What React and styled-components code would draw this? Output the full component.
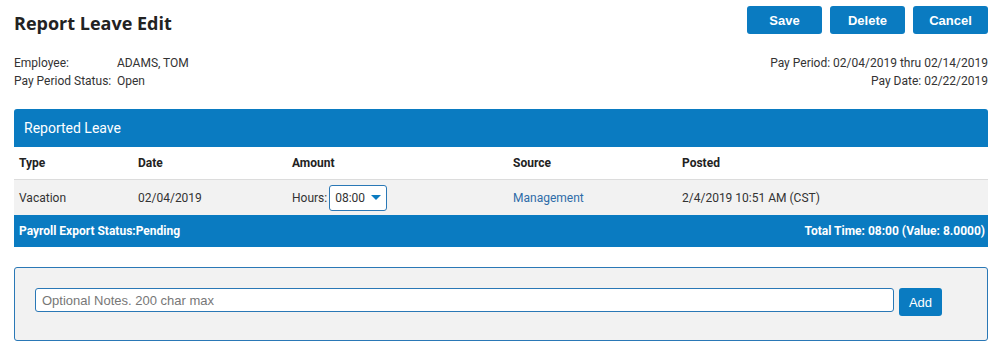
import React, { useState } from "react";
import styled, { createGlobalStyle } from "styled-components";

const GlobalStyle = createGlobalStyle`
  body {
    margin: 0;
    background: #fff;
    font-family: Roboto, "Liberation Sans", sans-serif;
    font-size: 12px;
    color: #333;
  }
`;

const BLUE = "#0a7bc1";

const Page = styled.div`
  padding: 6px 8px 0 14px;
  width: 974px;
`;

const TopBar = styled.div`
  display: flex;
  justify-content: space-between;
  align-items: flex-start;
`;

const Title = styled.h1`
  margin: 6px 0 0;
  font-family: "Open Sans", sans-serif;
  font-size: 18px;
  font-weight: 700;
  color: #222;
  line-height: 22px;
`;

const Buttons = styled.div`
  display: flex;
  gap: 8px;
`;

const Button = styled.button`
  width: ${({ $width }) => $width || "75px"};
  height: 28px;
  border: none;
  border-radius: 3px;
  background: ${BLUE};
  color: #fff;
  font-family: "Liberation Sans", Arial, sans-serif;
  font-size: 13px;
  font-weight: ${({ $bold }) => ($bold ? 700 : 400)};
  cursor: pointer;
  padding: 0;
`;

const InfoRow = styled.div`
  display: flex;
  justify-content: space-between;
  margin-top: 20px;
  line-height: 18px;
`;

const InfoGrid = styled.div`
  display: grid;
  grid-template-columns: 103px auto;
`;

const InfoRight = styled.div`
  text-align: right;
`;

const Panel = styled.div`
  margin-top: 19px;
`;

const PanelHeader = styled.div`
  background: ${BLUE};
  color: #fff;
  height: 38px;
  display: flex;
  align-items: center;
  padding-left: 10px;
  font-size: 14px;
  border-radius: 3px 3px 0 0;
`;

const Grid = styled.div`
  display: grid;
  grid-template-columns: 119px 154px 221px 169px 1fr;
`;

const HeadRow = styled(Grid)`
  height: 32px;
  align-items: center;
  border-bottom: 1px solid #dcdcdc;
  font-weight: 700;
  color: #222;
  padding-left: 5px;
`;

const DataRow = styled(Grid)`
  height: 35px;
  align-items: center;
  background: #f2f2f2;
  padding-left: 5px;
`;

const Cell = styled.div`
  display: flex;
  align-items: center;
  gap: 2px;
`;

const SourceLink = styled.a`
  color: #2e6ca8;
  text-decoration: none;
`;

const SelectBox = styled.div`
  display: flex;
  align-items: center;
  gap: 6px;
  height: 24px;
  padding: 0 5px 0 5px;
  border: 1px solid #2a78b6;
  border-radius: 3px;
  background: #fff;
`;

const Caret = styled.span`
  width: 0;
  height: 0;
  border-left: 5px solid transparent;
  border-right: 5px solid transparent;
  border-top: 5px solid ${BLUE};
`;

const PanelFooter = styled.div`
  background: ${BLUE};
  color: #fff;
  height: 32px;
  display: flex;
  align-items: center;
  justify-content: space-between;
  padding: 0 3px 0 5px;
  font-weight: 700;
`;

const NotesBox = styled.div`
  margin-top: 20px;
  height: 72px;
  box-sizing: content-box;
  border: 1px solid #2a78b6;
  border-radius: 3px;
  background: #f2f2f2;
  display: flex;
  align-items: flex-start;
  gap: 5px;
  padding: 20px 45px 0 20px;
  height: 52px;
`;

const NotesInput = styled.input`
  flex: 1;
  height: 24px;
  box-sizing: border-box;
  border: 1px solid #2a78b6;
  border-radius: 3px;
  padding: 0 6px;
  font-family: "Liberation Sans", Arial, sans-serif;
  font-size: 13px;
  outline: none;
  &::placeholder {
    color: #777;
  }
`;

export default function App() {
  const [notes, setNotes] = useState("");
  return (
    <>
      <GlobalStyle />
      <Page>
        <TopBar>
          <Title>Report Leave Edit</Title>
          <Buttons>
            <Button $bold>Save</Button>
            <Button $bold>Delete</Button>
            <Button $bold>Cancel</Button>
          </Buttons>
        </TopBar>
        <InfoRow>
          <InfoGrid>
            <span>Employee:</span>
            <span>ADAMS, TOM</span>
            <span>Pay Period Status:</span>
            <span>Open</span>
          </InfoGrid>
          <InfoRight>
            <div>Pay Period: 02/04/2019 thru 02/14/2019</div>
            <div>Pay Date: 02/22/2019</div>
          </InfoRight>
        </InfoRow>
        <Panel>
          <PanelHeader>Reported Leave</PanelHeader>
          <HeadRow>
            <Cell>Type</Cell>
            <Cell>Date</Cell>
            <Cell>Amount</Cell>
            <Cell>Source</Cell>
            <Cell>Posted</Cell>
          </HeadRow>
          <DataRow>
            <Cell>Vacation</Cell>
            <Cell>02/04/2019</Cell>
            <Cell>
              Hours:
              <SelectBox>
                08:00
                <Caret />
              </SelectBox>
            </Cell>
            <Cell>
              <SourceLink href="#">Management</SourceLink>
            </Cell>
            <Cell>2/4/2019 10:51 AM (CST)</Cell>
          </DataRow>
          <PanelFooter>
            <span>Payroll Export Status:Pending</span>
            <span>Total Time: 08:00 (Value: 8.0000)</span>
          </PanelFooter>
        </Panel>
        <NotesBox>
          <NotesInput
            placeholder="Optional Notes. 200 char max"
            value={notes}
            onChange={(e) => setNotes(e.target.value)}
          />
          <Button $width="43px">Add</Button>
        </NotesBox>
      </Page>
    </>
  );
}
